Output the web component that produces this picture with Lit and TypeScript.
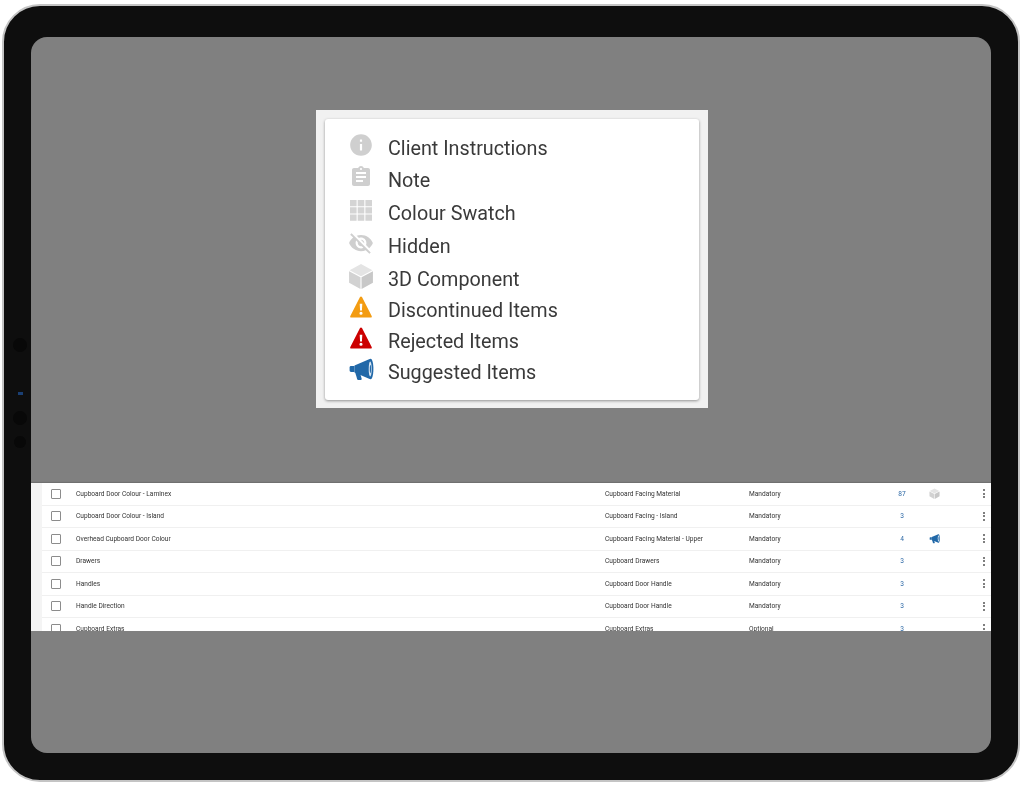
import { LitElement, html, css, svg } from "lit";
import { customElement } from "lit/decorators.js";

const bullhorn = svg`<path fill="#2168a8" d="M3 10h3.5v6H3c-.8 0-1.4-.6-1.4-1.4v-3.2C1.6 10.6 2.2 10 3 10z"/><path fill="#2168a8" d="M6.5 9.6 20.5 3.4c.8-.3 1.6-.6 2.2-.6 1.5 0 2.7 4.5 2.7 10.2s-1.2 10.2-2.7 10.2c-.6 0-1.4-.3-2.2-.6L6.5 16.4z"/><path fill="#2168a8" d="M7.2 16.6h4.6l1.9 6.2c.2.7-.2 1.2-.9 1.2h-2.6c-.5 0-.8-.2-1-.7z"/><ellipse cx="22.2" cy="13" rx="1.5" ry="7.6" fill="#d9e6f2"/><ellipse cx="22.4" cy="13" rx=".6" ry="4" fill="#2168a8"/>`;

const cube = svg`<path fill="#e4e4e4" d="M12 1 22.5 6.6 12 12.2 1.5 6.6z"/><path fill="#d2d2d2" d="M1 7.6 11.5 13.2V24L1 18.2z"/><path fill="#c8c8c8" d="M23 7.6 12.5 13.2V24L23 18.2z"/>`;

const triangle = (color: string) => svg`<path fill=${color} d="M12 .8c.5 0 .9.3 1.2.8l10.3 20c.5.9-.1 1.8-1.1 1.8H1.6c-1 0-1.6-.9-1.1-1.8L10.8 1.6c.3-.5.7-.8 1.2-.8z"/><path fill="#fff" d="M10.6 8.4h2.8l-.4 7.4h-2zM12 17a1.7 1.7 0 1 1 0 3.4 1.7 1.7 0 0 1 0-3.4z"/>`;

interface Legend { label: string; cls: string; view: string; icon: unknown; }

const legend: Legend[] = [
  { label: "Client Instructions", cls: "tall", view: "0 0 24 24", icon: svg`<path fill="#cfcfcf" d="M12 2C6.48 2 2 6.48 2 12s4.48 10 10 10 10-4.48 10-10S17.52 2 12 2zm1 15h-2v-6h2v6zm0-8h-2V7h2v2z"/>` },
  { label: "Note", cls: "tall", view: "-1 0 26 26", icon: svg`<path fill="#cfcfcf" d="M19 3h-4.18C14.4 1.84 13.3 1 12 1c-1.3 0-2.4.84-2.82 2H5c-1.1 0-2 .9-2 2v14c0 1.1.9 2 2 2h14c1.1 0 2-.9 2-2V5c0-1.1-.9-2-2-2zm-7 0c.55 0 1 .45 1 1s-.45 1-1 1-1-.45-1-1 .45-1 1-1zm2 14H7v-2h7v2zm3-4H7v-2h10v2zm0-4H7V7h10v2z"/>` },
  { label: "Colour Swatch", cls: "tall", view: "-1 -1 26 26", icon: svg`<path fill="#d4d4d4" d="M1 2h6.6v6.2H1zM8.7 2h6.6v6.2H8.7zM16.4 2H23v6.2h-6.6zM1 9.3h6.6v6.2H1zM8.7 9.3h6.6v6.2H8.7zM16.4 9.3H23v6.2h-6.6zM1 16.6h6.6v6.2H1zM8.7 16.6h6.6v6.2H8.7zM16.4 16.6H23v6.2h-6.6z"/>` },
  { label: "Hidden", cls: "tall", view: "0 0 24 24", icon: svg`<path fill="#cfcfcf" d="M12 7c2.76 0 5 2.24 5 5 0 .65-.13 1.26-.36 1.83l2.92 2.92c1.51-1.26 2.7-2.89 3.43-4.75-1.73-4.39-6-7.5-11-7.5-1.4 0-2.74.25-3.98.7l2.16 2.16C10.74 7.13 11.35 7 12 7zM2 4.27l2.28 2.28.46.46C3.08 8.3 1.78 10.02 1 12c1.73 4.39 6 7.5 11 7.5 1.55 0 3.03-.3 4.38-.84l.42.42L19.73 22 21 20.73 3.27 3 2 4.27zM7.53 9.8l1.55 1.55c-.05.21-.08.43-.08.65 0 1.66 1.34 3 3 3 .22 0 .44-.03.65-.08l1.55 1.55c-.67.33-1.41.53-2.2.53-2.76 0-5-2.24-5-5 0-.79.2-1.53.53-2.2zm4.31-.78l3.15 3.15.02-.16c0-1.66-1.34-3-3-3l-.17.01z"/>` },
  { label: "3D Component", cls: "tall nudge", view: "0 0 24 24", icon: cube },
  { label: "Discontinued Items", cls: "short", view: "-2 -2 28 28", icon: triangle("#f39c12") },
  { label: "Rejected Items", cls: "short", view: "-2 -2 28 28", icon: triangle("#cc0000") },
  { label: "Suggested Items", cls: "short", view: "0 0 26 26", icon: bullhorn },
];

interface Row { name: string; cat: string; type: string; count: string; icon?: "cube" | "horn"; }

const rows: Row[] = [
  { name: "Cupboard Door Colour - Laminex", cat: "Cupboard Facing Material", type: "Mandatory", count: "87", icon: "cube" },
  { name: "Cupboard Door Colour - Island", cat: "Cupboard Facing - Island", type: "Mandatory", count: "3" },
  { name: "Overhead Cupboard Door Colour", cat: "Cupboard Facing Material - Upper", type: "Mandatory", count: "4", icon: "horn" },
  { name: "Drawers", cat: "Cupboard Drawers", type: "Mandatory", count: "3" },
  { name: "Handles", cat: "Cupboard Door Handle", type: "Mandatory", count: "3" },
  { name: "Handle Direction", cat: "Cupboard Door Handle", type: "Mandatory", count: "3" },
  { name: "Cupboard Extras", cat: "Cupboard Extras", type: "Optional", count: "3" },
];

@customElement("app-root")
export class AppRoot extends LitElement {
  static styles = css`
    :host { display: block; width: 1024px; height: 786px; background: #fff; font-family: Roboto, "Liberation Sans", sans-serif; overflow: hidden; }
    .page { padding: 4px 4px 4px 2px; height: 786px; box-sizing: border-box; }
    .device {
      position: relative; box-sizing: border-box; height: 778px; padding: 31px 27px 26px 27px;
      background: #0e0e0e; border: 2px solid #c4c4c4; border-radius: 38px; filter: blur(.45px);
    }
    .sensor { position: absolute; left: 9px; width: 14px; height: 14px; border-radius: 50%; background: #080808; }
    .s1 { top: 332px; } .s2 { top: 405px; } .s3 { top: 430px; width: 12px; height: 12px; left: 10px; }
    .led { position: absolute; left: 14px; top: 386px; width: 5px; height: 3px; background: #1a3f73; }
    .screen {
      height: 716px; background: #808080; border-radius: 16px; overflow: hidden;
      display: flex; flex-direction: column;
    }
    .frame { box-sizing: border-box; width: 392px; height: 298px; margin: 73px 0 0 285px; padding: 9px; background: #f1f1f1; }
    .card {
      box-sizing: border-box; height: 281px; padding: 13px 0 0 23px; background: #fff; border-radius: 3px;
      box-shadow: 0 1px 3px rgba(0,0,0,.4);
    }
    .item { display: flex; align-items: center; gap: 14px; font-size: 19.75px; color: #3a3a3a; }
    .item.tall { height: 32.6px; }
    .item.short { height: 31px; }
    .item.nudge span { padding-top: 2px; }
    .item .ic { width: 26px; height: 26px; flex: none; margin-bottom: 6px; }
    .table { margin-top: 75px; height: 148px; overflow: hidden; background: #f4f4f4; padding-left: 11px; box-shadow: 0 -1px 1px rgba(0,0,0,.12); }
    .row {
      box-sizing: border-box; height: 22.5px; background: #fff; border-bottom: 1px solid #f0f0f0;
      display: grid; grid-template-columns: 34px 529px 144px 133px 40px 24px 1fr; align-items: center;
      font-size: 6.6px; color: #333;
    }
    .check { box-sizing: border-box; width: 10px; height: 10px; margin-left: 9px; border: 1px solid #8c8c8c; border-radius: 1px; }
    .count { text-align: center; color: #2f6aa6; }
    .mini { display: flex; justify-content: center; }
    .mini svg { width: 11px; height: 11px; display: block; }
    .dots { justify-self: end; margin-right: 6px; display: flex; flex-direction: column; gap: 1.5px; }
    .dots i { display: block; width: 2px; height: 2px; border-radius: 50%; background: #555; }
  `;

  render() {
    return html`<div class="page"><div class="device">
      <div class="sensor s1"></div><div class="led"></div><div class="sensor s2"></div><div class="sensor s3"></div>
      <div class="screen">
        <div class="frame"><div class="card">
          ${legend.map((l) => html`<div class="item ${l.cls}">
            <svg class="ic" viewBox=${l.view}>${l.icon}</svg>
            <span>${l.label}</span>
          </div>`)}
        </div></div>
        <div class="table">
          ${rows.map((r) => html`<div class="row">
            <div class="check"></div>
            <div>${r.name}</div><div>${r.cat}</div><div>${r.type}</div>
            <div class="count">${r.count}</div>
            <div class="mini">
              ${r.icon === "cube" ? html`<svg viewBox="0 0 24 24">${cube}</svg>` : ""}
              ${r.icon === "horn" ? html`<svg viewBox="0 0 26 26">${bullhorn}</svg>` : ""}
            </div>
            <div class="dots"><i></i><i></i><i></i></div>
          </div>`)}
        </div>
      </div>
    </div></div>`;
  }
}
